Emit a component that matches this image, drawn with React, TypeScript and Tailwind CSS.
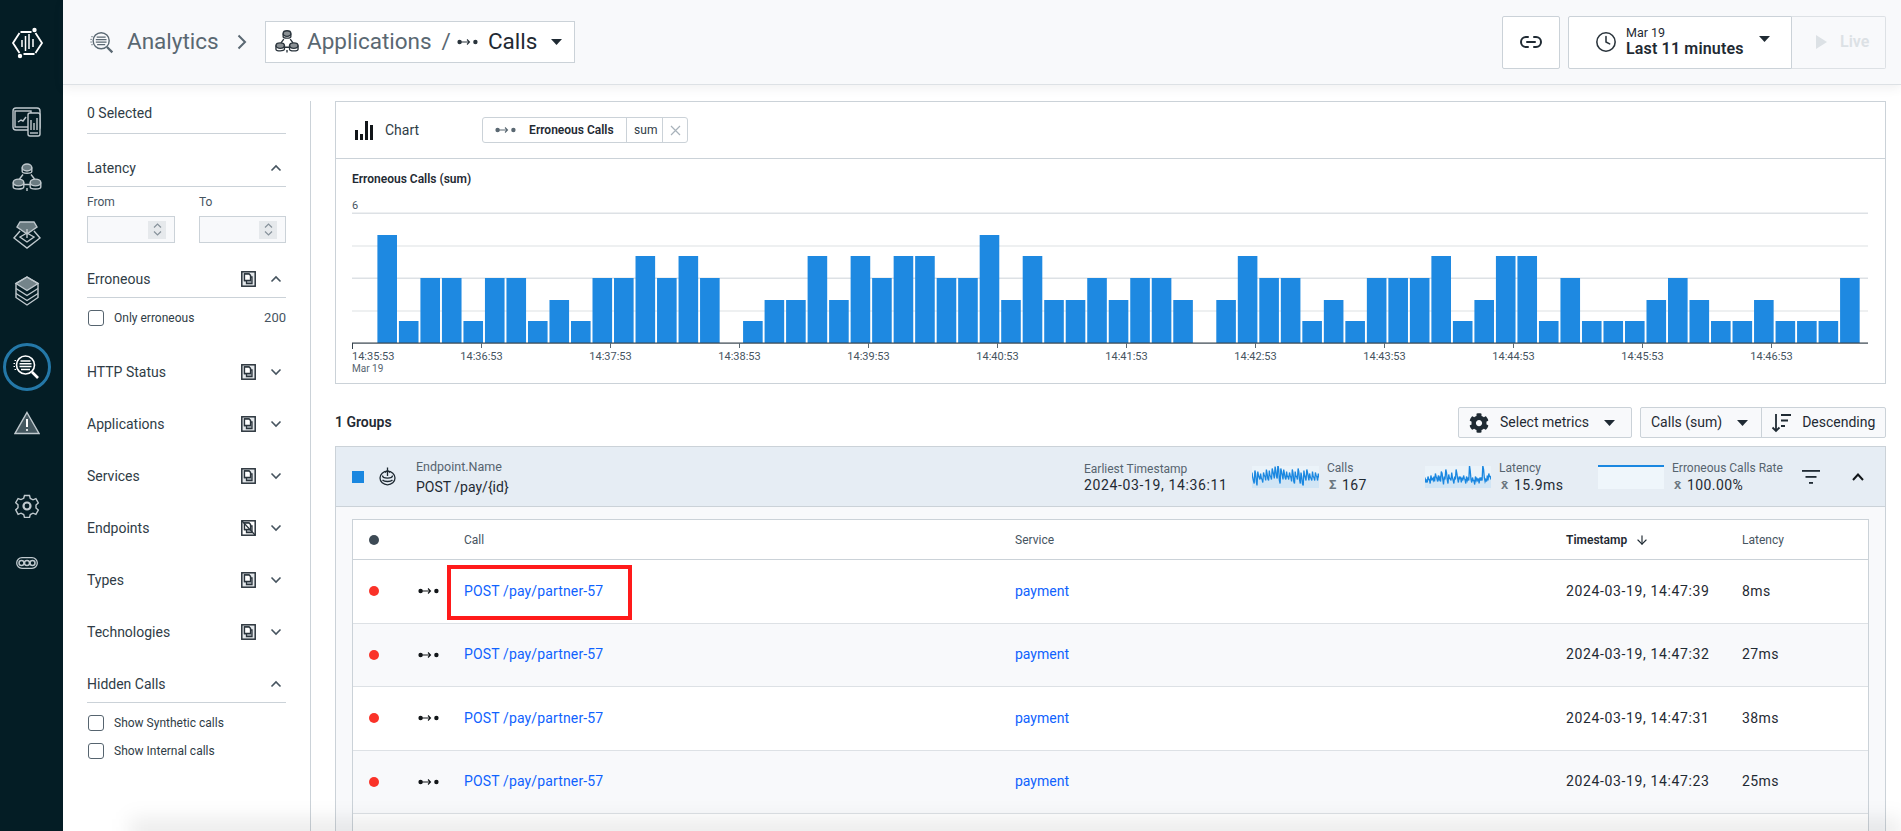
import React from "react";
import { Link2, Clock, ArrowDown } from "lucide-react";
import { FaCog } from "react-icons/fa";

const bars = [5,1,3,3,1,3,3,1,2,1,3,3,4,3,4,3,0,1,2,2,4,2,4,3,4,4,3,3,5,2,4,2,2,3,2,3,3,2,0,2,4,3,3,1,2,1,3,3,3,4,1,2,4,4,1,3,1,1,1,2,3,2,1,1,2,1,1,1,3];
const heights = [0,22,43,65,87,108];
const ticks = ["14:36:53","14:37:53","14:38:53","14:39:53","14:40:53","14:41:53","14:42:53","14:43:53","14:44:53","14:45:53","14:46:53"];
const rows = [["14:47:39","8ms"],["14:47:32","27ms"],["14:47:31","38ms"],["14:47:23","25ms"]];
const spark1 = [9,16,7,17,8,13,10,15,9,12,6,14,7,12,5,10,3,12,1,16,5,11,6,13,8,12,9,13,6,17,8,12,5,15,9,19,7,13,6,12,10,14,8,13,9,12,10];
const spark2 = [14,15,13,15,12,14,13,9,15,11,14,7,16,12,6,15,11,14,9,16,13,5,15,12,14,13,12,15,13,14,2,15,14,16,13,14,15,13,14,1,14,15,12,9,13];

function Caret({ className = "" }: { className?: string }) {
  return <svg width="11" height="6" viewBox="0 0 11 6" className={className}><path d="M0 0h11L5.5 6z" fill="#1f2a33" /></svg>;
}
function Chevron({ up }: { up?: boolean }) {
  return (
    <svg width="12" height="8" viewBox="0 0 12 8" fill="none" stroke="#46545f" strokeWidth="1.6">
      <path d={up ? "M1.5 6.5L6 2l4.5 4.5" : "M1.5 1.5L6 6l4.5-4.5"} />
    </svg>
  );
}
function CallIcon({ color = "#121619", w = 21 }: { color?: string; w?: number }) {
  return (
    <svg width={w} height="8" viewBox="0 0 21 8" fill="none" stroke={color}>
      <circle cx="2.6" cy="4" r="2.2" fill={color} stroke="none" />
      <circle cx="18.4" cy="4" r="2.2" fill={color} stroke="none" />
      <path d="M4 4h8.5M10 1.5L12.5 4 10 6.500" strokeWidth="1.100" />
    </svg>
  );
}
function CopyToggle({ off }: { off?: boolean }) {
  return (
    <svg width="15" height="16" viewBox="0 0 15 16" fill="none" stroke="#2a343c">
      <rect x="0.800" y="0.800" width="13.400" height="14.400" strokeWidth="1.500" fill={off ? "none" : "#e4e8eb"} />
      <path d="M3.500 3h4.500l1.500 1.500V9.500h-6z" strokeWidth="1.300" fill="#fff" />
      <path d="M9.500 6h1.500v6.500H5.500V10" strokeWidth="1.300" fill="#aeb6bc" />
      <path d="M3.500 3h4.500l1.500 1.500V9.500h-6z" strokeWidth="1.300" fill="#fff" />
      {off && <path d="M1 1l13 14" strokeWidth="1.200" />}
    </svg>
  );
}
function Check() {
  return <span className="block w-4 h-4 shrink-0 rounded-[3px] border border-[#56646f] bg-white" />;
}
function Spinner() {
  return (
    <span className="flex flex-col items-center justify-center gap-[3px] w-[18px] h-[18px] bg-[#e6e9ec]">
      <svg width="9" height="5" viewBox="0 0 9 5" fill="none" stroke="#87929b" strokeWidth="1.200"><path d="M1 4.500L4.500 1 8 4.500" /></svg>
      <svg width="9" height="5" viewBox="0 0 9 5" fill="none" stroke="#87929b" strokeWidth="1.200"><path d="M1 .5L4.500 4 8 .5" /></svg>
    </span>
  );
}
function FilterTitle({ title, up, copy, off }: { title: string; up?: boolean; copy?: boolean; off?: boolean }) {
  return (
    <div className={`flex items-center h-9 ${up ? "border-b-[1px] border-[#cbd2d8] h-[37px]" : ""}`}>
      <span className="flex-1 text-[14px] text-[#2f3c46]">{title}</span>
      {copy && <CopyToggle off={off} />}
      <span className="w-[30px] flex justify-end pr-[4px]"><Chevron up={up} /></span>
    </div>
  );
}
function AnalyticsIcon({ stroke = "#fff", size = 28 }: { stroke?: string; size?: number }) {
  return (
    <svg width={size} height={size} viewBox="0 0 28 28" fill="none" stroke={stroke}>
      <circle cx="12.500" cy="12" r="9" strokeWidth="1.600" />
      <path d="M7.500 8h10M6.500 10.800h12M6.500 13.600h12M8 16.400h9" strokeWidth="1.500" />
      <path d="M1.500 7.500h1.500M.5 10.500h1.500M.5 13.500h1.500M1.500 16.500h1.500" strokeWidth="1.100" />
      <path d="M19 19l6 6" strokeWidth="2.600" />
    </svg>
  );
}
function AppsIcon({ stroke = "#c0c9ce", size = 30, w = 1.400 }: { stroke?: string; size?: number; w?: number }) {
  return (
    <svg width={size} height={size} viewBox="0 0 30 30" fill="none" stroke={stroke} strokeWidth={w}>
      <ellipse cx="15" cy="4.500" rx="4.800" ry="3.500" fill={stroke} fillOpacity=".55" />
      <path d="M10.200 4.500v4c0 2.300 9.600 2.300 9.600 0v-4" />
      <path d="M11 11.500L7.500 16M19 11.500l3.500 4.500M12 21.500h6M15 25v3" />
      <ellipse cx="6.500" cy="19.500" rx="5.300" ry="3.400" fill={stroke} fillOpacity=".55" />
      <path d="M1.200 19.500v4.500c0 2.700 10.600 2.700 10.600 0v-4.500" />
      <ellipse cx="23.500" cy="19.500" rx="5.300" ry="3.400" fill={stroke} fillOpacity=".55" />
      <path d="M18.200 19.500v4.500c0 2.700 10.600 2.700 10.600 0v-4.500" />
    </svg>
  );
}
function Spark({ data, w, h }: { data: number[]; w: number; h: number }) {
  const dense = data.flatMap((v, i) => [v - 2.5 + (i % 2), v + 2.5 - (i % 3)]);
  const step = w / (dense.length - 1);
  const pts = dense.map((v, i) => `${(i * step).toFixed(1)},${v}`).join(" ");
  return (
    <svg width={w} height={h} viewBox={`0 0 ${w} ${h}`} className="shrink-0">
      <rect x="0" y="0" width={w} height={h} fill="#eff6fb" fillOpacity=".6" />
      <polygon points={`0,${h} ${pts} ${w},${h}`} fill="#1a87e0" fillOpacity=".12" />
      <polyline points={pts} fill="none" stroke="#1a87e0" strokeWidth="1.300" />
    </svg>
  );
}
function Metric({ label, sym, value, chart, className = "" }: { label: string; sym: string; value: string; chart: React.ReactNode; className?: string }) {
  return (
    <div className={`flex items-center ${className}`}>
      {chart}
      <div className="ml-2">
        <div className="text-[12px] leading-4 text-[#56646f]">{label}</div>
        <div className="flex items-center text-[14px] leading-4 mt-[1px] text-[#1f2a33] tracking-[0.03em]">
          <span className="text-[13px] w-[15px] pl-[2px] font-bold text-[#6b7780]">{sym}</span>{value}
        </div>
      </div>
    </div>
  );
}

export default function App() {
  return (
    <div className="relative flex h-screen overflow-hidden bg-white font-[Roboto,sans-serif] text-[#1f2a33]">
      <aside className="w-[63px] shrink-0 bg-[#041d25] flex flex-col items-center pr-[9px]">
        <div className="h-[94px] flex items-center justify-center pb-[8px]">
          <svg width="33" height="32" viewBox="0 0 33 32" fill="none" stroke="#fff" strokeWidth="1.800">
            <path d="M8.500 6L2 16l6.500 10M24.500 26L31 16 24.500 6M9.500 5h11M12.500 27h11" />
            <path d="M11 13v7M14.500 9v15M18 7v15M22 12v8" strokeWidth="1.500" />
            <circle cx="23.500" cy="3" r="2.200" fill="#fff" stroke="none" />
            <circle cx="9" cy="29" r="2.200" fill="#fff" stroke="none" />
          </svg>
        </div>
        <div className="h-[56px] flex items-center">
          <svg width="30" height="30" viewBox="0 0 30 30" fill="none" stroke="#c0c9ce" strokeWidth="1.400">
            <rect x="1" y="1" width="27" height="22" rx="3" />
            <rect x="3" y="4" width="16" height="16" />
            <path d="M6 15l3-2 2 1 3-4" />
            <rect x="16" y="6" width="12" height="23" rx="2" fill="#041d25" />
            <path d="M19 13v10M22 16v7M25 11v12" />
            <path d="M18 26h8" />
          </svg>
        </div>
        <div className="h-[56px] flex items-center"><AppsIcon /></div>
        <div className="h-[57px] flex items-center">
          <svg width="30" height="30" viewBox="0 0 30 30" fill="none" stroke="#c0c9ce" strokeWidth="1.400">
            <path d="M8 2h14l3 5-10 7L5 7z" fill="#c0c9ce" fillOpacity=".55" />
            <path d="M8 11l-6 7 13 10 13-10-6-7" />
            <path d="M8 17l7-4 7 4-7 5z" />
            <path d="M15 9v9" />
          </svg>
        </div>
        <div className="h-[56px] flex items-center">
          <svg width="26" height="30" viewBox="0 0 26 30" fill="none" stroke="#c0c9ce" strokeWidth="1.400">
            <path d="M13 1l11 6.500v14L13 29 2 21.500v-14z" />
            <path d="M2 7.500l11 7 11-7-11-6.500z" fill="#c0c9ce" fillOpacity=".6" />
            <path d="M2 12.500l11 7 11-7M2 17.500l11 7 11-7" />
          </svg>
        </div>
        <div className="mt-6 h-[48px] w-[48px] shrink-0 rounded-full border-[3px] border-[#2478a8] flex items-center justify-center"><AnalyticsIcon /></div>
        <div className="h-[62px] flex items-center pt-[2px]">
          <svg width="26" height="24" viewBox="0 0 26 24" fill="none" stroke="#c0c9ce" strokeWidth="1.400">
            <path d="M13 1.500L25 22.500H1z" fill="#c0c9ce" fillOpacity=".35" />
            <path d="M13 8v8" strokeWidth="2" stroke="#fff" />
            <circle cx="13" cy="19" r="1.100" fill="#fff" stroke="none" />
          </svg>
        </div>
        <div className="mt-[25px] h-[56px] flex items-center">
          <svg width="24" height="24" viewBox="0 0 24 24" fill="none" stroke="#c0c9ce" strokeWidth="1.400">
            <path d="M9.500 1.500h5l.8 3 2.700 1.300 2.900-1.100 2.400 4.200-2.300 2.100v3l2.300 2.100-2.400 4.200-2.900-1.100-2.700 1.300-.8 3h-5l-.8-3-2.700-1.300-2.900 1.100L.7 15.900 3 13.800v-3L.7 8.700l2.400-4.200L6 5.600l2.700-1.300z" />
            <circle cx="12" cy="12" r="3.500" strokeWidth="2.200" />
          </svg>
        </div>
        <div className="h-[58px] flex items-center">
          <svg width="22" height="12" viewBox="0 0 22 12" fill="none" stroke="#c0c9ce" strokeWidth="1.300">
            <rect x=".7" y=".7" width="20.600" height="10.600" rx="5.300" />
            <circle cx="5.500" cy="6" r="2.500" strokeWidth="1.500" />
            <circle cx="11" cy="6" r="2.500" strokeWidth="1.500" />
            <circle cx="16.500" cy="6" r="2.500" strokeWidth="1.500" />
          </svg>
        </div>
      </aside>

      <div className="flex-1 min-w-0 flex flex-col">
        <header className="relative z-10 h-[85px] shrink-0 flex items-center bg-[#f8f9fb] border-b border-[#dde1e5] shadow-[0_3px_10px_rgba(60,70,80,0.08)]">
          <div className="ml-[27px]"><AnalyticsIcon stroke="#5a6872" size={25} /></div>
          <span className="ml-[12px] w-[91px] text-[22.500px] text-[#5a6872]">Analytics</span>
          <svg className="ml-[19px]" width="10" height="16" viewBox="0 0 10 16" fill="none" stroke="#5a6872" strokeWidth="2"><path d="M1.500 1.500L8 8l-6.500 6.500" /></svg>
          <div className="ml-[18px] w-[310px] h-[42px] flex items-center bg-white border border-[#cbd2d8] pl-[9px]">
            <AppsIcon stroke="#2a343c" size={24} w={1.700} />
            <span className="ml-[8px] text-[22.500px] text-[#5a6872]">Applications</span>
            <span className="ml-[10px] text-[22.500px] text-[#5a6872]">/</span>
            <span className="ml-[6px]"><CallIcon color="#2a343c" /></span>
            <span className="ml-[10px] text-[22.500px] text-[#1f2a33]">Calls</span>
            <Caret className="ml-[14px]" />
          </div>
          <div className="flex-1" />
          <button className="w-[58px] h-[53px] flex items-center justify-center bg-white border border-[#cbd2d8] rounded-[2px]">
            <Link2 size={24} color="#1f2a33" strokeWidth={2} />
          </button>
          <button className="ml-[8px] w-[224px] h-[53px] flex items-center bg-white border border-[#cbd2d8] pl-[26px] rounded-l-[2px]">
            <Clock size={22} color="#2a343c" strokeWidth={1.700} />
            <span className="ml-[9px] text-left">
              <span className="block text-[12.500px] leading-[14px] mt-[-1px]">Mar 19</span>
              <span className="block text-[16px] leading-[18px] font-semibold whitespace-nowrap tracking-[0.01em]">Last 11 minutes</span>
            </span>
            <Caret className="ml-[15px] mb-[6px]" />
          </button>
          <button className="w-[94px] h-[53px] mr-[15px] flex items-center pl-[24px] bg-[#f8f9fb] border border-l-0 border-[#dde1e5] rounded-r-[2px]">
            <svg width="11" height="14" viewBox="0 0 11 14"><path d="M0 0l11 7-11 7z" fill="#dce1e5" /></svg>
            <span className="ml-[13px] text-[16px] font-semibold text-[#dce1e5]">Live</span>
          </button>
        </header>

        <div className="flex-1 min-h-0 flex overflow-hidden">
          <div className="w-[248px] shrink-0 pl-[24px] pr-[24px] mt-[16px] border-r border-[#cbd2d8]">
            <div className="h-[33px] border-b border-[#cbd2d8] text-[14px] leading-6 text-[#2f3c46]">0 Selected</div>
            <div className="mt-4"><FilterTitle title="Latency" up /></div>
            <div className="mt-[7px] flex text-[12px] leading-4 text-[#46545f]"><span className="w-[112px]">From</span><span>To</span></div>
            <div className="mt-[6px] flex justify-between">
              <div className="w-[88px] h-[27px] flex items-center justify-end pr-[8px] bg-[#f8f9fb] border border-[#cbd2d8]"><Spinner /></div>
              <div className="w-[87px] h-[27px] flex items-center justify-end pr-[8px] bg-[#f8f9fb] border border-[#cbd2d8]"><Spinner /></div>
            </div>
            <div className="mt-[18px]"><FilterTitle title="Erroneous" up copy /></div>
            <div className="mt-3 flex items-center pl-[1px] text-[12px] text-[#2f3c46] h-4">
              <Check /><span className="ml-[10px] flex-1">Only erroneous</span><span className="text-[13px] text-[#46545f]">200</span>
            </div>
            <div className="mt-[28px] flex flex-col gap-4">
              <FilterTitle title="HTTP Status" copy />
              <FilterTitle title="Applications" copy />
              <FilterTitle title="Services" copy />
              <FilterTitle title="Endpoints" copy off />
              <FilterTitle title="Types" copy />
              <FilterTitle title="Technologies" copy />
              <FilterTitle title="Hidden Calls" up />
            </div>
            <div className="mt-3 flex flex-col gap-3 pl-[1px] text-[12px] text-[#2f3c46]">
              <div className="flex items-center h-4"><Check /><span className="ml-[10px]">Show Synthetic calls</span></div>
              <div className="flex items-center h-4"><Check /><span className="ml-[10px]">Show Internal calls</span></div>
            </div>
          </div>

          <main className="flex-1 min-w-0 pl-[24px] pr-[15px] pt-[16px] overflow-hidden">
            <section className="h-[283px] border border-[#cbd2d8] bg-white">
              <div className="h-[57px] border-b border-[#cbd2d8] flex items-center pl-[19px]">
                <svg width="19" height="19" viewBox="0 0 19 19" fill="#121619"><rect x="0" y="9" width="3" height="10" /><rect x="5" y="13" width="3" height="6" /><rect x="10" y="0" width="3" height="19" /><rect x="15" y="4" width="3" height="15" /></svg>
                <span className="ml-[11px] text-[14px] text-[#2f3c46]">Chart</span>
                <div className="ml-[63px] h-[26px] w-[206px] flex items-center border border-[#cbd2d8] rounded-[3px] text-[12px]">
                  <span className="ml-[12px]"><CallIcon color="#5a6872" /></span>
                  <span className="ml-[13px] font-semibold text-[#1f2a33]">Erroneous Calls</span>
                  <span className="ml-auto w-[36px] h-full border-l border-[#cbd2d8] flex items-center pl-[7px] text-[#2f3c46]">sum</span>
                  <span className="w-[25px] h-full border-l border-[#cbd2d8] flex items-center justify-center">
                    <svg width="11" height="11" viewBox="0 0 11 11" stroke="#a8b2ba" strokeWidth="1.200"><path d="M1 1l9 9M10 1l-9 9" /></svg>
                  </span>
                </div>
              </div>
              <div className="pl-[16px] pr-[17px]">
                <div className="mt-[12px] h-4 text-[12px] leading-4 font-semibold text-[#1f2a33]">Erroneous Calls (sum)</div>
                <div className="mt-[12px] h-[13px] text-[11px] leading-[14px] text-[#46545f]">6</div>
                <svg width="1516" height="137" viewBox="0 0 1516 137" className="block">
                  <rect x="0" y="0.500" width="1516" height="1.500" fill="#dde1e5" />
                  <rect x="0" y="33" width="1516" height="2" fill="#eef0f1" />
                  <rect x="0" y="65.500" width="1516" height="1.500" fill="#dde1e5" />
                  <rect x="0" y="98" width="1516" height="2" fill="#eef0f1" />
                  {bars.map((v, i) => (
                    <rect key={i} x={25.400 + i * 21.510} y={131 - heights[v]} width="19.600" height={heights[v]} fill="#1a87e0" fillOpacity=".98" />
                  ))}
                  <rect x="0" y="130.500" width="1516" height="1.200" fill="#36424c" />
                  <rect x="0" y="131" width="1" height="6" fill="#36424c" />
                  {ticks.map((t, i) => <rect key={t} x={129 + i * 129} y="131" width="1" height="5" fill="#5a6872" />)}
                </svg>
                <div className="mt-[2px] flex text-[11px] leading-3 text-[#46545f]">
                  <span className="w-[65px]">14:35:53</span>
                  {ticks.map((t) => <span key={t} className="w-[129px] text-center">{t}</span>)}
                </div>
                <div className="text-[10px] leading-3 text-[#56646f]">Mar 19</div>
              </div>
            </section>

            <div className="mt-[23px] h-[31px] flex items-center">
              <span className="text-[14px] font-semibold">1 Groups</span>
              <div className="flex-1" />
              <div className="w-[174px] h-full flex items-center pl-[10px] bg-[#f8f9fb] border border-[#cbd2d8] rounded-[2px]">
                <FaCog size={20} color="#1f2a33" />
                <span className="ml-[11px] text-[14px]">Select metrics</span>
                <Caret className="ml-[15px]" />
              </div>
              <div className="ml-[8px] w-[246px] h-full flex items-center bg-[#f8f9fb] border border-[#cbd2d8] rounded-[2px]">
                <span className="ml-[10px] text-[14px]">Calls (sum)</span>
                <Caret className="ml-[15px]" />
                <span className="ml-[13px] h-full w-px bg-[#cbd2d8]" />
                <svg className="ml-[9px]" width="21" height="20" viewBox="0 0 21 20" fill="none" stroke="#1f2a33" strokeWidth="1.800">
                  <path d="M5 1v17M1.500 14.500L5 18l3.500-3.500M10 2h10M10 7.500h7M10 13h4" />
                </svg>
                <span className="ml-[10px] text-[14px]">Descending</span>
              </div>
            </div>

            <section className="mt-[8px] border border-[#cbd2d8] bg-[#f8f9fb] pb-[40px]">
              <div className="h-[60px] flex items-center bg-[#e6edf4] border-b border-[#cbd2d8] pl-[16px]">
                <span className="w-3 h-3 bg-[#1a87e0] shrink-0" />
                <svg className="ml-[15px] shrink-0" width="17" height="19" viewBox="0 0 17 19" fill="none" stroke="#1f2a33" strokeWidth="1.300">
                  <ellipse cx="8.500" cy="11" rx="7.500" ry="6.800" />
                  <path d="M3.500 8.500c0 3.500 10 3.500 10 0M3.500 13c2 2 8 2 10 0" />
                  <path d="M8.500 .5V9M6 5.500l2.500-2 2.500 2" />
                </svg>
                <div className="ml-[20px] w-[668px]">
                  <div className="text-[12.500px] leading-4 text-[#56646f]">Endpoint.Name</div>
                  <div className="text-[14px] leading-4 mt-[4px]">POST /pay/&#123;id&#125;</div>
                </div>
                <div className="w-[168px]">
                  <div className="text-[12px] leading-4 text-[#56646f]">Earliest Timestamp</div>
                  <div className="text-[14px] leading-4 tracking-[0.045em] whitespace-nowrap">2024-03-19, 14:36:11</div>
                </div>
                <Metric label="Calls" sym="Σ" value="167" chart={<Spark data={spark1} w={67} h={22} />} className="w-[173px]" />
                <Metric label="Latency" sym="x̄" value="15.9ms" chart={<Spark data={spark2} w={66} h={22} />} className="w-[173px]" />
                <Metric label="Erroneous Calls Rate" sym="x̄" value="100.00%" chart={
                  <svg width="66" height="24" viewBox="0 0 66 24" className="shrink-0"><rect width="66" height="24" fill="#eff6fb" /><rect width="66" height="2" fill="#1a87e0" /></svg>
                } className="w-[204px]" />
                <svg width="18" height="14" viewBox="0 0 18 14" fill="#1f2a33"><rect width="18" height="1.800" /><rect x="3.500" y="6" width="11" height="1.800" /><rect x="7" y="12" width="4" height="1.800" /></svg>
                <svg className="ml-[32px]" width="12" height="8" viewBox="0 0 12 8" fill="none" stroke="#121619" strokeWidth="2"><path d="M1 7l5-5.500L11 7" /></svg>
              </div>
              <div className="mx-[16px] mt-[12px] border border-[#cbd2d8] bg-white">
                <div className="h-[40px] flex items-center border-b border-[#cbd2d8] text-[12px] text-[#46545f]">
                  <span className="w-[111px] pl-[16px] shrink-0"><span className="block w-[10px] h-[10px] rounded-full bg-[#3d4a55]" /></span>
                  <span className="w-[551px] shrink-0">Call</span>
                  <span className="w-[551px] shrink-0">Service</span>
                  <span className="w-[176px] shrink-0 flex items-center font-semibold text-[#1f2a33]">Timestamp<ArrowDown size={14} className="ml-[8px]" /></span>
                  <span>Latency</span>
                </div>
                {rows.map(([time, lat], i) => (
                  <div key={time} className={`h-[63.500px] flex items-center border-b border-[#dde1e5] text-[14px] ${i % 2 === 1 ? "bg-[#f8f9fb]" : "bg-white"}`}>
                    <span className="w-[111px] flex items-center shrink-0 pl-[16px]">
                      <span className="block w-[10px] h-[10px] rounded-full bg-[#fa3228]" />
                      <span className="ml-[39px]"><CallIcon /></span>
                    </span>
                    <span className="w-[551px] shrink-0 text-[#0f62fe] tracking-[0.01em]">POST /pay/partner-57</span>
                    <span className="w-[551px] shrink-0 text-[#0f62fe]">payment</span>
                    <span className="w-[176px] shrink-0 text-[#1f2a33] tracking-[0.045em]">2024-03-19, {time}</span>
                    <span className="text-[#1f2a33] tracking-[0.03em]">{lat}</span>
                  </div>
                ))}
                <div className="h-[63.500px]" />
              </div>
            </section>
          </main>
        </div>
      </div>

      <div className="absolute left-[447px] top-[565px] w-[185px] h-[55px] border-[4px] border-[#ff1a1a]" />
      <div className="absolute left-[130px] right-0 bottom-[-12px] h-[24px] bg-[#00000014] blur-[10px] pointer-events-none" />
    </div>
  );
}
